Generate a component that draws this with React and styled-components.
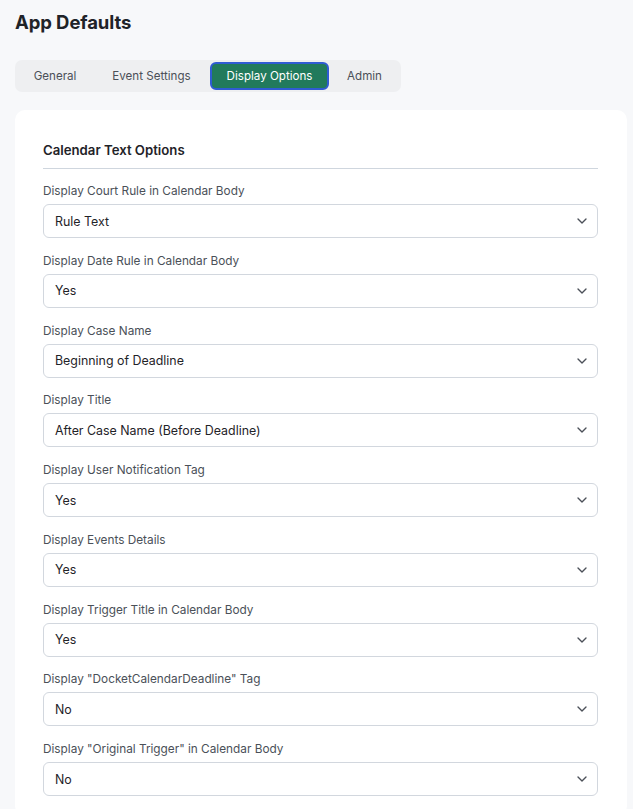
import React from "react";
import styled, { createGlobalStyle } from "styled-components";
import { ChevronDown } from "lucide-react";

const Global = createGlobalStyle`
  html, body { margin: 0; padding: 0; background: #f7f8fa; }
  body { font-family: Inter, "Noto Sans", sans-serif; color: #1f2328; -webkit-font-smoothing: antialiased; }
`;

const Page = styled.div`
  padding: 10px 6px 0 15px;
  display: flex;
  flex-direction: column;
`;

const Title = styled.h1`
  margin: 0;
  font-size: 18.5px;
  line-height: 24px;
  font-weight: 700;
  color: #1f2328;
  letter-spacing: -0.1px;
`;

const TabBar = styled.div`
  margin-top: 26px;
  align-self: flex-start;
  display: flex;
  align-items: center;
  gap: 1px;
  padding: 2px;
  height: 32px;
  box-sizing: border-box;
  background: #eeeff1;
  border-radius: 7px;
`;

const Tab = styled.button`
  box-sizing: border-box;
  width: ${(p) => p.$w}px;
  border: 2px solid ${(p) => (p.$active ? "#2f5bd3" : "transparent")};
  background: ${(p) => (p.$active ? "#217a5c" : "transparent")};
  color: ${(p) => (p.$active ? "#ffffff" : "#4b5058")};
  font-family: inherit;
  font-size: 11.6px;
  height: 28px;
  padding: 0;
  border-radius: 6px;
  cursor: pointer;
  white-space: nowrap;
`;

const Card = styled.section`
  margin-top: 18px;
  background: #ffffff;
  border-radius: 10px;
  padding: 31px 29px 20px 28px;
  display: flex;
  flex-direction: column;
`;

const Heading = styled.h2`
  margin: 0;
  font-size: 13.2px;
  line-height: 18px;
  font-weight: 600;
  color: #1f2328;
  padding-bottom: 9px;
  border-bottom: 1px solid #cfd6de;
`;

const Fields = styled.div`
  margin-top: 14px;
  display: flex;
  flex-direction: column;
  gap: 14.75px;
`;

const Field = styled.div`
  display: flex;
  flex-direction: column;
  gap: 5px;
`;

const Label = styled.label`
  font-size: 11.8px;
  line-height: 16px;
  color: #4a5058;
`;

const Select = styled.div`
  height: 34px;
  box-sizing: border-box;
  border: 1px solid #d2d7de;
  border-radius: 6px;
  background: #fff;
  display: flex;
  align-items: center;
  justify-content: space-between;
  padding: 0 7px 0 11px;
  font-size: 12.4px;
  color: #1f2328;
`;

const Chevron = styled(ChevronDown)`
  color: #4b5058;
  flex: none;
`;

const tabs = [
  { name: "General", w: 76 },
  { name: "Event Settings", w: 115 },
  { name: "Display Options", w: 119, active: true },
  { name: "Admin", w: 69 },
];

const fields = [
  ["Display Court Rule in Calendar Body", "Rule Text"],
  ["Display Date Rule in Calendar Body", "Yes"],
  ["Display Case Name", "Beginning of Deadline"],
  ["Display Title", "After Case Name (Before Deadline)"],
  ["Display User Notification Tag", "Yes"],
  ["Display Events Details", "Yes"],
  ["Display Trigger Title in Calendar Body", "Yes"],
  ['Display "DocketCalendarDeadline" Tag', "No"],
  ['Display "Original Trigger" in Calendar Body', "No"],
];

export default function App() {
  return (
    <>
      <Global />
      <Page>
        <Title>App Defaults</Title>
        <TabBar>
          {tabs.map((t) => (
            <Tab key={t.name} $active={t.active} $w={t.w}>
              {t.name}
            </Tab>
          ))}
        </TabBar>
        <Card>
          <Heading>Calendar Text Options</Heading>
          <Fields>
            {fields.map(([label, value]) => (
              <Field key={label}>
                <Label>{label}</Label>
                <Select>
                  <span>{value}</span>
                  <Chevron size={16} strokeWidth={2} />
                </Select>
              </Field>
            ))}
          </Fields>
        </Card>
      </Page>
    </>
  );
}
